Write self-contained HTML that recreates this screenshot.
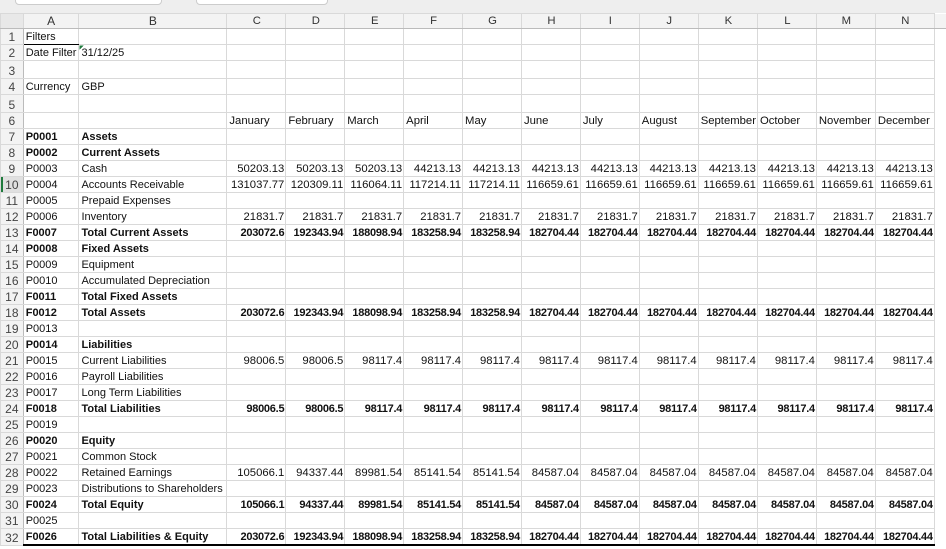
<!DOCTYPE html>
<html><head><meta charset="utf-8"><style>
body{margin:0;width:946px;height:549px;overflow:hidden;background:#fff;font-family:"Liberation Sans",sans-serif;font-size:11px;color:#111;position:relative}
.top{position:absolute;left:0;top:0;width:946px;height:13px;background:#eeeeee}
.top div{position:absolute;top:-6px;height:9px;background:#fff;border:1px solid #ccc;border-radius:4px}
table{position:absolute;left:0;top:13px;border-collapse:collapse;table-layout:fixed}
td{border:1px solid #d9d9d9;padding:0 2px;height:15px;line-height:13px;vertical-align:bottom;white-space:nowrap;overflow:hidden}
tr.h td{background:#f3f3f3;text-align:center;color:#333;font-size:12px;height:14px;vertical-align:middle;border-bottom:1px solid #bbb}
td.r{background:#f3f3f3;text-align:center;color:#444;font-size:12px;padding:0;border-right:1px solid #bbb}
tr.t3 td{height:17px}
tr td:nth-child(n+4){text-align:right;padding-right:1px;font-size:11.3px}
tr.h td{text-align:center!important}
tr.m td:nth-child(n+4){text-align:left}
.b td:nth-child(n+2){font-weight:bold}
.b td:nth-child(n+4){letter-spacing:-0.25px;font-size:11px}
td.x{border:none;background:#fff}
tr.last td:nth-child(n+2):not(.x){border-bottom:2px solid #000}
</style></head><body>
<div class="top"><div style="left:15px;width:145px"></div><div style="left:196px;width:130px"></div></div>
<table>
<colgroup><col style="width:23px"><col style="width:55px"><col style="width:148px"><col span="12" style="width:59px"><col style="width:12px"></colgroup>
<tr class="h"><td style="background:#e8e8e8"></td><td>A</td><td>B</td><td>C</td><td>D</td><td>E</td><td>F</td><td>G</td><td>H</td><td>I</td><td>J</td><td>K</td><td>L</td><td>M</td><td>N</td><td class="x"></td></tr>
<tr><td class="r">1</td><td style="border-bottom:1px solid #000">Filters</td><td></td><td></td><td></td><td></td><td></td><td></td><td></td><td></td><td></td><td></td><td></td><td></td><td></td><td class="x"></td></tr>
<tr><td class="r">2</td><td>Date Filter</td><td style="text-align:left;background:linear-gradient(135deg,#1e7a3c 3px,transparent 3px)">31/12/25</td><td></td><td></td><td></td><td></td><td></td><td></td><td></td><td></td><td></td><td></td><td></td><td></td><td class="x"></td></tr>
<tr class="t3"><td class="r">3</td><td></td><td></td><td></td><td></td><td></td><td></td><td></td><td></td><td></td><td></td><td></td><td></td><td></td><td></td><td class="x"></td></tr>
<tr><td class="r">4</td><td>Currency</td><td>GBP</td><td></td><td></td><td></td><td></td><td></td><td></td><td></td><td></td><td></td><td></td><td></td><td></td><td class="x"></td></tr>
<tr class="t3"><td class="r">5</td><td></td><td></td><td></td><td></td><td></td><td></td><td></td><td></td><td></td><td></td><td></td><td></td><td></td><td></td><td class="x"></td></tr>
<tr class="m"><td class="r">6</td><td></td><td></td><td>January</td><td>February</td><td>March</td><td>April</td><td>May</td><td>June</td><td>July</td><td>August</td><td>September</td><td>October</td><td>November</td><td>December</td><td class="x"></td></tr>
<tr class="b"><td class="r">7</td><td>P0001</td><td>Assets</td><td></td><td></td><td></td><td></td><td></td><td></td><td></td><td></td><td></td><td></td><td></td><td></td><td class="x"></td></tr>
<tr class="b"><td class="r">8</td><td>P0002</td><td>Current Assets</td><td></td><td></td><td></td><td></td><td></td><td></td><td></td><td></td><td></td><td></td><td></td><td></td><td class="x"></td></tr>
<tr><td class="r">9</td><td>P0003</td><td>Cash</td><td>50203.13</td><td>50203.13</td><td>50203.13</td><td>44213.13</td><td>44213.13</td><td>44213.13</td><td>44213.13</td><td>44213.13</td><td>44213.13</td><td>44213.13</td><td>44213.13</td><td>44213.13</td><td class="x"></td></tr>
<tr><td class="r" style="background:#e0e0e0;box-shadow:inset 2px 0 #1e7a3c">10</td><td>P0004</td><td>Accounts Receivable</td><td>131037.77</td><td>120309.11</td><td>116064.11</td><td>117214.11</td><td>117214.11</td><td>116659.61</td><td>116659.61</td><td>116659.61</td><td>116659.61</td><td>116659.61</td><td>116659.61</td><td>116659.61</td><td class="x"></td></tr>
<tr><td class="r">11</td><td>P0005</td><td>Prepaid Expenses</td><td></td><td></td><td></td><td></td><td></td><td></td><td></td><td></td><td></td><td></td><td></td><td></td><td class="x"></td></tr>
<tr><td class="r">12</td><td>P0006</td><td>Inventory</td><td>21831.7</td><td>21831.7</td><td>21831.7</td><td>21831.7</td><td>21831.7</td><td>21831.7</td><td>21831.7</td><td>21831.7</td><td>21831.7</td><td>21831.7</td><td>21831.7</td><td>21831.7</td><td class="x"></td></tr>
<tr class="b"><td class="r">13</td><td>F0007</td><td>Total Current Assets</td><td>203072.6</td><td>192343.94</td><td>188098.94</td><td>183258.94</td><td>183258.94</td><td>182704.44</td><td>182704.44</td><td>182704.44</td><td>182704.44</td><td>182704.44</td><td>182704.44</td><td>182704.44</td><td class="x"></td></tr>
<tr class="b"><td class="r">14</td><td>P0008</td><td>Fixed Assets</td><td></td><td></td><td></td><td></td><td></td><td></td><td></td><td></td><td></td><td></td><td></td><td></td><td class="x"></td></tr>
<tr><td class="r">15</td><td>P0009</td><td>Equipment</td><td></td><td></td><td></td><td></td><td></td><td></td><td></td><td></td><td></td><td></td><td></td><td></td><td class="x"></td></tr>
<tr><td class="r">16</td><td>P0010</td><td>Accumulated Depreciation</td><td></td><td></td><td></td><td></td><td></td><td></td><td></td><td></td><td></td><td></td><td></td><td></td><td class="x"></td></tr>
<tr class="b"><td class="r">17</td><td>F0011</td><td>Total Fixed Assets</td><td></td><td></td><td></td><td></td><td></td><td></td><td></td><td></td><td></td><td></td><td></td><td></td><td class="x"></td></tr>
<tr class="b"><td class="r">18</td><td>F0012</td><td>Total Assets</td><td>203072.6</td><td>192343.94</td><td>188098.94</td><td>183258.94</td><td>183258.94</td><td>182704.44</td><td>182704.44</td><td>182704.44</td><td>182704.44</td><td>182704.44</td><td>182704.44</td><td>182704.44</td><td class="x"></td></tr>
<tr><td class="r">19</td><td>P0013</td><td></td><td></td><td></td><td></td><td></td><td></td><td></td><td></td><td></td><td></td><td></td><td></td><td></td><td class="x"></td></tr>
<tr class="b"><td class="r">20</td><td>P0014</td><td>Liabilities</td><td></td><td></td><td></td><td></td><td></td><td></td><td></td><td></td><td></td><td></td><td></td><td></td><td class="x"></td></tr>
<tr><td class="r">21</td><td>P0015</td><td>Current Liabilities</td><td>98006.5</td><td>98006.5</td><td>98117.4</td><td>98117.4</td><td>98117.4</td><td>98117.4</td><td>98117.4</td><td>98117.4</td><td>98117.4</td><td>98117.4</td><td>98117.4</td><td>98117.4</td><td class="x"></td></tr>
<tr><td class="r">22</td><td>P0016</td><td>Payroll Liabilities</td><td></td><td></td><td></td><td></td><td></td><td></td><td></td><td></td><td></td><td></td><td></td><td></td><td class="x"></td></tr>
<tr><td class="r">23</td><td>P0017</td><td>Long Term Liabilities</td><td></td><td></td><td></td><td></td><td></td><td></td><td></td><td></td><td></td><td></td><td></td><td></td><td class="x"></td></tr>
<tr class="b"><td class="r">24</td><td>F0018</td><td>Total Liabilities</td><td>98006.5</td><td>98006.5</td><td>98117.4</td><td>98117.4</td><td>98117.4</td><td>98117.4</td><td>98117.4</td><td>98117.4</td><td>98117.4</td><td>98117.4</td><td>98117.4</td><td>98117.4</td><td class="x"></td></tr>
<tr><td class="r">25</td><td>P0019</td><td></td><td></td><td></td><td></td><td></td><td></td><td></td><td></td><td></td><td></td><td></td><td></td><td></td><td class="x"></td></tr>
<tr class="b"><td class="r">26</td><td>P0020</td><td>Equity</td><td></td><td></td><td></td><td></td><td></td><td></td><td></td><td></td><td></td><td></td><td></td><td></td><td class="x"></td></tr>
<tr><td class="r">27</td><td>P0021</td><td>Common Stock</td><td></td><td></td><td></td><td></td><td></td><td></td><td></td><td></td><td></td><td></td><td></td><td></td><td class="x"></td></tr>
<tr><td class="r">28</td><td>P0022</td><td>Retained Earnings</td><td>105066.1</td><td>94337.44</td><td>89981.54</td><td>85141.54</td><td>85141.54</td><td>84587.04</td><td>84587.04</td><td>84587.04</td><td>84587.04</td><td>84587.04</td><td>84587.04</td><td>84587.04</td><td class="x"></td></tr>
<tr><td class="r">29</td><td>P0023</td><td>Distributions to Shareholders</td><td></td><td></td><td></td><td></td><td></td><td></td><td></td><td></td><td></td><td></td><td></td><td></td><td class="x"></td></tr>
<tr class="b"><td class="r">30</td><td>F0024</td><td>Total Equity</td><td>105066.1</td><td>94337.44</td><td>89981.54</td><td>85141.54</td><td>85141.54</td><td>84587.04</td><td>84587.04</td><td>84587.04</td><td>84587.04</td><td>84587.04</td><td>84587.04</td><td>84587.04</td><td class="x"></td></tr>
<tr><td class="r">31</td><td>P0025</td><td></td><td></td><td></td><td></td><td></td><td></td><td></td><td></td><td></td><td></td><td></td><td></td><td></td><td class="x"></td></tr>
<tr class="b last"><td class="r">32</td><td>F0026</td><td>Total Liabilities &amp; Equity</td><td>203072.6</td><td>192343.94</td><td>188098.94</td><td>183258.94</td><td>183258.94</td><td>182704.44</td><td>182704.44</td><td>182704.44</td><td>182704.44</td><td>182704.44</td><td>182704.44</td><td>182704.44</td><td class="x"></td></tr>
</table>
</body></html>
